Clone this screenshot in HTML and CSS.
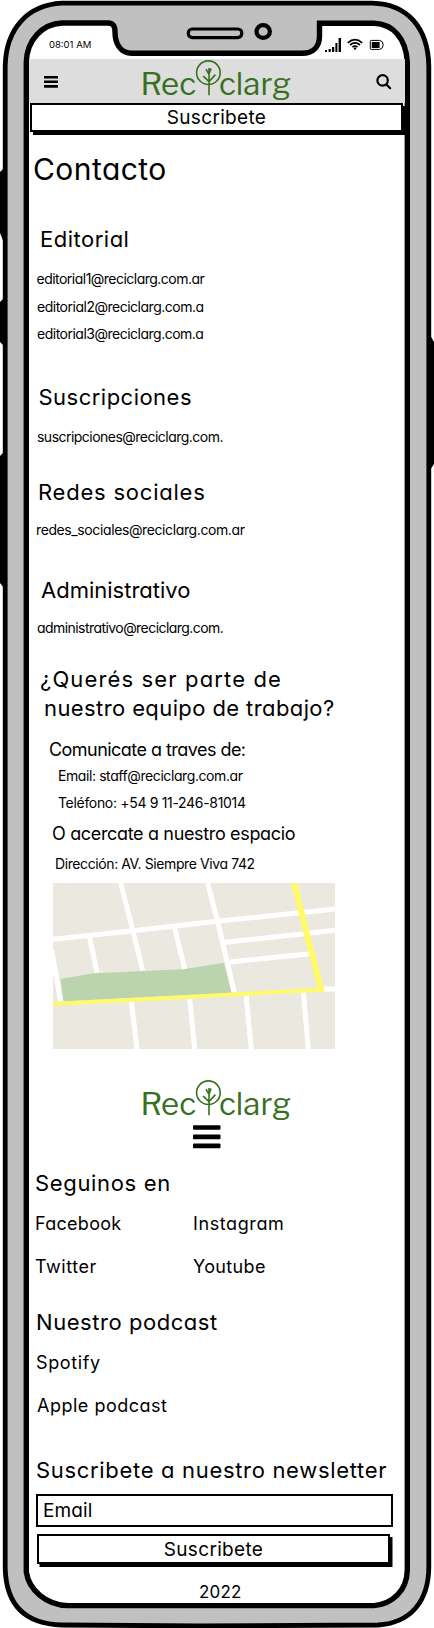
FILE: index.html
```html
<!DOCTYPE html>
<html lang="es">
<head>
<meta charset="utf-8">
<title>Reciclarg - Contacto</title>
<link rel="stylesheet" href="styles.css">
</head>
<body>
<div class="phone">
  <svg class="frame" viewBox="0 0 434 1628" aria-hidden="true">
    <path class="side" d="M4 168L0 172V233L4 243ZM4 298L0 302V342L4 346ZM4 452L0 456V583L4 588ZM430 335L434 342V464L430 470Z"/>
    <path class="body" d="M62 3.2H372C408 4 428 28 428.8 66V1566C429 1602 410 1623 378 1625L200 1626 62 1625C26 1624 6 1606 5.2 1568V66C6 28 28 5 62 3.2Z"/>
    <path class="inner" d="M62 23H108C113 23 115 26 115 32C115 43 120 53.3 132 53.3H302C314 53.3 319.5 46 319.5 36V23.3H374C393 24 406 38 407.3 62V1570C407 1590 393 1604 374 1605.6H68C46 1605 29 1590 26.3 1572V62C27 40 42 24 62 23Z"/>
    <rect class="speaker" x="188.3" y="29" width="53.5" height="8.6" rx="4"/>
    <ellipse class="camera" cx="263.2" cy="31.5" rx="6.7" ry="6.4"/>
  </svg>

  <div class="screen">
    <div class="status">
      <span class="clock">08:01 AM</span>
      <svg class="indicators" viewBox="324 36 62 18" aria-hidden="true">
        <path d="M325 50h2v2h-2zM328.6 49h2.2v3h-2.2zM332 47h2.2v5H332zM335.4 43h2v9h-2zM338.6 38h2.4v14h-2.4z"/>
        <path class="waves" d="M347.8 42.8Q355 36.4 362.2 42.8M350 45Q355 40.6 360 45M352.4 47.2Q355 45 357.6 47.2"/>
        <circle cx="355" cy="48.6" r="1.2"/>
        <path class="cell" d="M371.2 40.4H379.8Q383.2 41 383.2 44.8T379.8 49.4H371.2Q370.3 49.4 370.3 48.5V41.3Q370.3 40.4 371.2 40.4Z"/>
        <path d="M371.8 42H379.6V48H371.8z"/>
      </svg>
    </div>

    <header class="topbar">
      <svg class="burger" viewBox="0 0 14 12"><path d="M0 0h14v2.5H0zM0 4.5h14v2.6H0zM0 9.1h14v2.6H0z"/></svg>
      <svg class="logo" viewBox="0 0 155 44">
        <text x="0.5" y="36" textLength="55.5">Rec</text>
        <text x="79" y="36" textLength="72">clarg</text>
        <circle cx="68.4" cy="13.7" r="11.8"/>
        <path d="M69 9V36.3M63.2 17.2L69 22.6L75.4 15.6M66 10.2L69 15.4L71 9.6"/>
      </svg>
      <svg class="search" viewBox="0 0 16 16"><circle cx="6.6" cy="6.4" r="5.2"/><path d="M10.2 10.4L14.2 14.2"/></svg>
    </header>

    <button class="button top-button"><span>Suscribete</span></button>

    <main>
      <h1 class="contact">Contacto</h1>
      <h2 class="editorial">Editorial</h2>
      <p class="mail ed1">editorial1@reciclarg.com.ar</p>
      <p class="mail ed2">editorial2@reciclarg.com.a</p>
      <p class="mail ed3">editorial3@reciclarg.com.a</p>
      <h2 class="subs">Suscripciones</h2>
      <p class="mail subs-mail">suscripciones@reciclarg.com.</p>
      <h2 class="social">Redes sociales</h2>
      <p class="mail social-mail">redes_sociales@reciclarg.com.ar</p>
      <h2 class="admin">Administrativo</h2>
      <p class="mail admin-mail">administrativo@reciclarg.com.</p>
      <h2 class="join">¿Querés ser parte de</h2>
      <h2 class="team">nuestro equipo de trabajo?</h2>
      <h3 class="reach">Comunicate a traves de:</h3>
      <p class="mail staff">Email: staff@reciclarg.com.ar</p>
      <p class="mail phone-no">Teléfono: +54 9 11-246-81014</p>
      <h3 class="visit">O acercate a nuestro espacio</h3>
      <p class="mail address">Dirección: AV. Siempre Viva 742</p>
      <svg class="map" viewBox="159 39 846 498">
        <path class="land" d="M159 39H1005V537H159Z"/>
        <path class="park" d="M182 327L280 310 550 298 672 278 695 370 190 394Z"/>
        <g class="streets">
          <path d="M159 208L400 182 650 154 1005 117M362 39L398 180 428 301M623 39L653 155 703 368M269 203L291 308M524 174L554 297M675 217L1005 181M690 276L930 251M155 240L182 394M394 394L411 537M569 386L584 537M738 374L754 537M910 366L925 537M970 357H1005"/>
        </g>
        <path class="avenue thin" d="M159 402L400 389 965 359"/>
        <path class="avenue" d="M882 39L920 190 965 365"/>
      </svg>
    </main>

    <footer>
      <svg class="logo" viewBox="0 0 155 44">
        <text x="0.5" y="36" textLength="55.5">Rec</text>
        <text x="79" y="36" textLength="72">clarg</text>
        <circle cx="68.4" cy="13.7" r="11.8"/>
        <path d="M69 9V36.3M63.2 17.2L69 22.6L75.4 15.6M66 10.2L69 15.4L71 9.6"/>
      </svg>
      <svg class="menu" viewBox="0 0 28 24"><rect y="0.2" width="27.5" height="4.6" rx="1"/><rect y="9.6" width="27.5" height="4.6" rx="1"/><rect y="18.6" width="27.5" height="4.6" rx="1"/></svg>
      <h2 class="follow">Seguinos en</h2>
      <div class="links">
        <a class="facebook">Facebook</a><a class="instagram">Instagram</a>
        <a class="twitter">Twitter</a><a class="youtube">Youtube</a>
      </div>
      <h2 class="podcast">Nuestro podcast</h2>
      <a class="spotify">Spotify</a>
      <a class="apple">Apple podcast</a>
      <h2 class="news">Suscribete a nuestro newsletter</h2>
      <div class="field">Email</div>
      <button class="button news-button"><span>Suscribete</span></button>
      <div class="year">2022</div>
    </footer>
  </div>
</div>
</body>
</html>
```
FILE: styles.css
```css
* { box-sizing: border-box; }

body {
  margin: 0;
  background: #fff;
  color: #000;
  font-family: Inter, "Liberation Sans", sans-serif;
  font-feature-settings: "cv11" 1;
}

h1, h2, h3, p { margin: 0; font-weight: 400; white-space: nowrap; }
svg { display: block; }

.phone { position: relative; width: 434px; height: 1628px; overflow: hidden; }

/* Device outline behind the screen content */
.frame { position: absolute; inset: 0; width: 434px; height: 1628px; }
.side { fill: #000; }
.body { fill: #c0c0c0; stroke: #000; stroke-width: 4.8; }
.inner { fill: #fff; stroke: #000; stroke-width: 5.4; }
.speaker { fill: none; stroke: #000; stroke-width: 3.2; }
.camera { fill: none; stroke: #000; stroke-width: 4.2; }

.screen { position: relative; margin: 0 29px; width: 376px; display: flex; flex-direction: column; }

.status { height: 59px; display: flex; justify-content: space-between; padding: 36px 19px 0 20px; }
.clock { font-size: 9.5px; line-height: 17px; letter-spacing: 0; white-space: nowrap; }
.indicators { width: 62px; height: 18px; }
.waves { fill: none; stroke: #000; stroke-width: 1.7; }
.cell { fill: none; stroke: #000; stroke-width: 1; }

.topbar { height: 44px; background: #ddd; display: flex; align-items: flex-start; }
.burger { width: 14px; height: 12px; margin: 17px 0 0 15px; }
.topbar .logo { margin: 0 0 0 82px; }
.logo { width: 155px; height: 44px; flex: none; overflow: visible; }
.logo text { font: 31px "Libre Franklin", "Open Sans", sans-serif; fill: #38701f; }
.logo circle, .logo path { fill: none; stroke: #38701f; stroke-width: 1.6; }
.search { width: 16px; height: 16px; margin: 15px 0 0 81px; }
.search circle, .search path { fill: none; stroke: #000; stroke-width: 2.2; stroke-linecap: round; }

.button {
  display: block;
  padding: 0;
  border: 2px solid #000;
  border-radius: 0;
  background: #fff;
  color: #000;
  font: 19px/24px Inter, sans-serif;
  font-feature-settings: "cv11" 1;
  letter-spacing: 0.32px;
}
.top-button { width: 373px; height: 29px; padding-top: 1px; margin: 0 0 4px 1px; box-shadow: 3px 3px 0 #000; }
.news-button { width: 353px; height: 30px; padding-top: 1px; margin: 7px 0 0 8px; box-shadow: 2.5px 3px 0 #000; }

main, footer { display: flex; flex-direction: column; align-items: flex-start; }

h1 { font-size: 30px; line-height: 36px; }
h2 { font-size: 22px; line-height: 28px; }
h3, a { font-size: 18px; line-height: 24px; }
.mail { font-size: 14px; line-height: 20px; }

.contact { margin: 15px 0 0 4px; letter-spacing: 0.45px; }
.editorial { margin: 38px 0 0 11px; letter-spacing: 0.5px; }
.ed1 { margin: 16px 0 0 7.5px; letter-spacing: -0.52px; }
.ed2 { margin: 8px 0 0 8px; letter-spacing: -0.49px; }
.ed3 { margin: 7px 0 0 8px; letter-spacing: -0.5px; }
.subs { margin: 39px 0 0 9.5px; letter-spacing: 0.48px; }
.subs-mail { margin: 16px 0 0 8px; letter-spacing: -0.52px; }
.social { margin: 31px 0 0 9px; letter-spacing: 0.78px; }
.social-mail { margin: 14px 0 0 7px; letter-spacing: -0.39px; }
.admin { margin: 36px 0 0 12px; letter-spacing: 0; }
.admin-mail { margin: 14px 0 0 8px; letter-spacing: -0.56px; }
.join { margin: 27px 0 0 11px; letter-spacing: 1.14px; }
.team { margin: 1px 0 0 15px; letter-spacing: 0.4px; }
.reach { margin: 16px 0 0 20px; letter-spacing: -0.54px; }
.staff { margin: 4px 0 0 29px; letter-spacing: -0.41px; }
.phone-no { margin: 7px 0 0 29px; letter-spacing: -0.32px; }
.visit { margin: 9px 0 0 23px; letter-spacing: -0.34px; }
.address { margin: 8px 0 0 26px; letter-spacing: -0.4px; }

.map { width: 282px; height: 166px; margin: 9px 0 0 24px; overflow: hidden; }
.land { fill: #ebe8e0; }
.park { fill: #bbd4ad; }
.streets { fill: none; stroke: #fff; stroke-width: 15; }
.avenue { fill: none; stroke: #fffa6c; stroke-width: 19; }
.thin { stroke-width: 12; }

footer .logo { margin: 30px 0 0 111px; }
.menu { width: 28px; height: 24px; margin: 2px 0 0 164px; }
.follow { margin: 20px 0 0 6px; letter-spacing: 0.66px; }
.links { display: grid; grid-template-columns: 158px 120px; row-gap: 19px; margin: 15px 0 0 6px; }
.facebook { letter-spacing: 0.28px; }
.instagram { letter-spacing: 0.6px; }
.twitter { letter-spacing: 0.55px; }
.youtube { letter-spacing: 0.36px; }
.podcast { margin: 29px 0 0 7px; letter-spacing: 0.55px; }
.spotify { margin: 15px 0 0 7px; letter-spacing: 0.62px; }
.apple { margin: 19px 0 0 8px; letter-spacing: 0.5px; }
.news { margin: 38px 0 0 7px; letter-spacing: 0.68px; }
.field { width: 357px; height: 33px; margin: 10px 0 0 7px; border: 2px solid #000; padding-left: 5px; font-size: 19px; line-height: 30px; letter-spacing: 0.1px; }
.year { margin: 16px 0 0 170px; font-size: 17px; line-height: 24px; letter-spacing: 0.18px; }
```
